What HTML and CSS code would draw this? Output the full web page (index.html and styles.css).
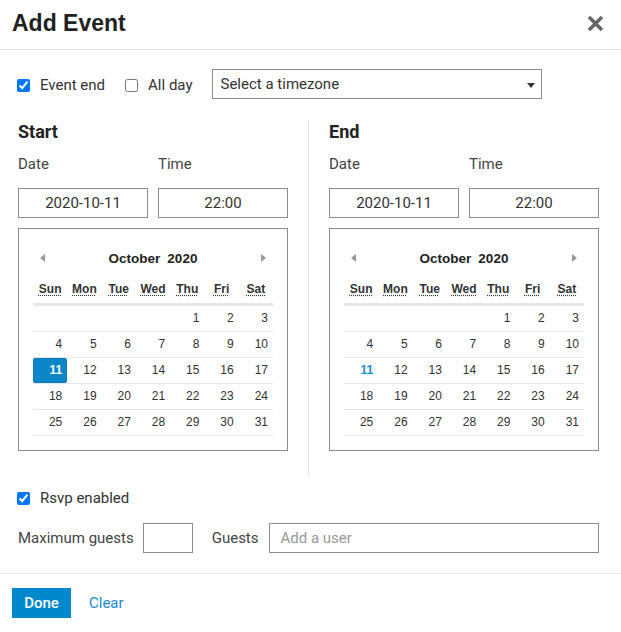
FILE: index.html
```html
<!DOCTYPE html>
<html lang="en">
<head>
    <meta charset="UTF-8">
    <title>Add Event</title>
    <link rel="stylesheet" href="styles.css">
</head>
<body>
    <div class="modal">
        <!-- Kopfzeile -->
        <header class="modal-header">
            <h1>Add Event</h1>
            <button class="close" title="Close">
                <svg width="17" height="17" viewBox="0 0 17 17"><path d="M2 2 L15 15 M15 2 L2 15" stroke="#666" stroke-width="3.6" fill="none"/></svg>
            </button>
        </header>

        <section class="modal-body">
            <div class="options-row">
                <label class="check"><input type="checkbox" checked>Event end</label>
                <label class="check"><input type="checkbox">All day</label>
                <div class="select">
                    <span>Select a timezone</span>
                    <span class="caret"></span>
                </div>
            </div>

            <div class="columns">
                <div class="col">
                    <h2>Start</h2>
                    <div class="fields">
                        <div class="field"><label>Date</label><input type="text" value="2020-10-11"></div>
                        <div class="field"><label>Time</label><input type="text" value="22:00"></div>
                    </div>
                    <div class="calendar">
                        <div class="cal-nav">
                            <span class="arrow prev"></span>
                            <span class="cal-title"><span>October</span><span>2020</span></span>
                            <span class="arrow next"></span>
                        </div>
                        <table>
                            <thead>
                                <tr><th><abbr title="Sunday">Sun</abbr></th><th><abbr title="Monday">Mon</abbr></th><th><abbr title="Tuesday">Tue</abbr></th><th><abbr title="Wednesday">Wed</abbr></th><th><abbr title="Thursday">Thu</abbr></th><th><abbr title="Friday">Fri</abbr></th><th><abbr title="Saturday">Sat</abbr></th></tr>
                            </thead>
                            <tbody>
                                <tr><td></td><td></td><td></td><td></td><td><span>1</span></td><td><span>2</span></td><td><span>3</span></td></tr>
                                <tr><td><span>4</span></td><td><span>5</span></td><td><span>6</span></td><td><span>7</span></td><td><span>8</span></td><td><span>9</span></td><td><span>10</span></td></tr>
                                <tr><td><span class="selected">11</span></td><td><span>12</span></td><td><span>13</span></td><td><span>14</span></td><td><span>15</span></td><td><span>16</span></td><td><span>17</span></td></tr>
                                <tr><td><span>18</span></td><td><span>19</span></td><td><span>20</span></td><td><span>21</span></td><td><span>22</span></td><td><span>23</span></td><td><span>24</span></td></tr>
                                <tr><td><span>25</span></td><td><span>26</span></td><td><span>27</span></td><td><span>28</span></td><td><span>29</span></td><td><span>30</span></td><td><span>31</span></td></tr>
                            </tbody>
                        </table>
                    </div>
                </div>

                <div class="col col-end">
                    <h2>End</h2>
                    <div class="fields">
                        <div class="field"><label>Date</label><input type="text" value="2020-10-11"></div>
                        <div class="field"><label>Time</label><input type="text" value="22:00"></div>
                    </div>
                    <div class="calendar">
                        <div class="cal-nav">
                            <span class="arrow prev"></span>
                            <span class="cal-title"><span>October</span><span>2020</span></span>
                            <span class="arrow next"></span>
                        </div>
                        <table>
                            <thead>
                                <tr><th><abbr title="Sunday">Sun</abbr></th><th><abbr title="Monday">Mon</abbr></th><th><abbr title="Tuesday">Tue</abbr></th><th><abbr title="Wednesday">Wed</abbr></th><th><abbr title="Thursday">Thu</abbr></th><th><abbr title="Friday">Fri</abbr></th><th><abbr title="Saturday">Sat</abbr></th></tr>
                            </thead>
                            <tbody>
                                <tr><td></td><td></td><td></td><td></td><td><span>1</span></td><td><span>2</span></td><td><span>3</span></td></tr>
                                <tr><td><span>4</span></td><td><span>5</span></td><td><span>6</span></td><td><span>7</span></td><td><span>8</span></td><td><span>9</span></td><td><span>10</span></td></tr>
                                <tr><td><span class="today">11</span></td><td><span>12</span></td><td><span>13</span></td><td><span>14</span></td><td><span>15</span></td><td><span>16</span></td><td><span>17</span></td></tr>
                                <tr><td><span>18</span></td><td><span>19</span></td><td><span>20</span></td><td><span>21</span></td><td><span>22</span></td><td><span>23</span></td><td><span>24</span></td></tr>
                                <tr><td><span>25</span></td><td><span>26</span></td><td><span>27</span></td><td><span>28</span></td><td><span>29</span></td><td><span>30</span></td><td><span>31</span></td></tr>
                            </tbody>
                        </table>
                    </div>
                </div>
            </div>

            <label class="check rsvp"><input type="checkbox" checked>Rsvp enabled</label>

            <div class="guests-row">
                <label>Maximum guests</label>
                <input type="text" class="max-input">
                <label class="guests-label">Guests</label>
                <input type="text" class="guests-input" placeholder="Add a user">
            </div>
        </section>

        <!-- Fußzeile -->
        <footer class="modal-footer">
            <button class="btn-done">Done</button>
            <button class="btn-clear">Clear</button>
        </footer>
    </div>
</body>
</html>
```

FILE: styles.css
```css
/* Grundlayout */
body {
    margin: 0;
    background-color: white;
    font-family: Roboto, "Liberation Sans", sans-serif;
    color: #333;
}

.modal {
    width: 621px;
}

/* Kopfzeile */
.modal-header {
    height: 50px;
    box-sizing: border-box;
    padding: 9px 17px 0 12px;
    border-bottom: 1px solid #e6e6e6;
    display: flex;
    justify-content: space-between;
    align-items: flex-start;
}

.modal-header h1 {
    margin: 0;
    font-family: "Liberation Sans", Arial, sans-serif;
    font-size: 23px;
    line-height: 28px;
    font-weight: bold;
    color: #222;
}

.close {
    margin-top: 6px;
    padding: 0;
    border: none;
    background: none;
    width: 17px;
    height: 17px;
    cursor: pointer;
}

.close svg {
    display: block;
}

/* Inhalt */
.modal-body {
    padding: 19px 22px 20px 18px;
}

.check {
    display: flex;
    align-items: center;
    font-size: 15px;
    line-height: 18px;
    color: #333;
}

.check input {
    margin: 1px 10px 0 -1px;
    width: 13px;
    height: 13px;
}

.options-row {
    display: flex;
    align-items: center;
    height: 30px;
}

.options-row .check {
    padding-top: 2px;
}

.options-row .check + .check {
    margin-left: 21px;
}

.select {
    margin-left: 19px;
    width: 330px;
    height: 30px;
    box-sizing: border-box;
    border: 1px solid #8c8c8c;
    display: flex;
    align-items: center;
    justify-content: space-between;
    padding: 0 6px 0 8px;
    font-size: 15px;
    color: #333;
}

.caret {
    width: 0;
    height: 0;
    border-left: 4.5px solid transparent;
    border-right: 4.5px solid transparent;
    border-top: 5px solid #333;
    margin-top: 2px;
}

/* Start / End Spalten */
.columns {
    margin-top: 21px;
    display: grid;
    grid-template-columns: 270px 291px;
    column-gap: 20px;
}

.col {
    padding-bottom: 26px;
}

.col-end {
    border-left: 1px solid #e6e6e6;
    padding-left: 20px;
}

.col h2 {
    margin: 0;
    padding-top: 1px;
    font-size: 18px;
    line-height: 22px;
    font-weight: bold;
    color: #222;
}

.fields {
    margin-top: 12px;
    display: flex;
    gap: 10px;
}

.field {
    display: flex;
    flex-direction: column;
    width: 130px;
}

.field label {
    font-size: 15px;
    line-height: 18px;
    color: #444;
}

.field input {
    margin-top: 15px;
    width: 130px;
    height: 30px;
    box-sizing: border-box;
    border: 1px solid #8c8c8c;
    padding: 0;
    text-align: center;
    font-family: Roboto, sans-serif;
    font-size: 15px;
    color: #333;
}

/* Kalender */
.calendar {
    margin-top: 10px;
    width: 270px;
    box-sizing: border-box;
    border: 1px solid #8c8c8c;
    padding: 14px;
    font-family: "Liberation Sans", Arial, sans-serif;
    color: #333;
}

.cal-nav {
    height: 30px;
    display: flex;
    align-items: center;
    justify-content: space-between;
    padding: 0 7px;
}

.cal-title {
    display: flex;
    gap: 7px;
    font-size: 13.5px;
    font-weight: bold;
    color: #222;
}

.arrow {
    width: 0;
    height: 0;
    border-top: 4.5px solid transparent;
    border-bottom: 4.5px solid transparent;
}

.arrow.prev {
    border-right: 5px solid #999;
}

.arrow.next {
    border-left: 5px solid #999;
}

.calendar table {
    width: 100%;
    border-collapse: collapse;
    table-layout: fixed;
}

.calendar th {
    height: 28px;
    padding: 2px 0 0;
    font-size: 12px;
    font-weight: bold;
    text-align: center;
    vertical-align: middle;
    border-bottom: 3px solid #e6e6e6;
}

.calendar abbr {
    text-decoration: underline dotted;
    text-underline-offset: 2px;
}

.calendar td {
    height: 25px;
    padding: 0;
    border-bottom: 1px solid #e6e6e6;
    font-size: 12px;
}

.calendar td span {
    display: block;
    height: 25px;
    line-height: 25px;
    text-align: right;
    padding-right: 5px;
}

.calendar td span.selected {
    background-color: #0a86c9;
    color: white;
    font-weight: bold;
    border-radius: 3px;
    box-shadow: inset 0 0 0 1px #0b7dbb;
}

.calendar td span.today {
    color: #1a8fd3;
    font-weight: bold;
}

/* RSVP */
.rsvp {
    margin-top: 11px;
    height: 20px;
}

.guests-row {
    margin-top: 15px;
    display: flex;
    align-items: center;
    font-size: 15px;
    color: #444;
    white-space: nowrap;
}

.guests-row label,
.guests-row input {
    flex-shrink: 0;
}

.guests-row input {
    height: 30px;
    box-sizing: border-box;
    border: 1px solid #8c8c8c;
    font-family: Roboto, sans-serif;
    font-size: 15px;
}

.max-input {
    margin-left: 9px;
    width: 50px;
}

.guests-label {
    margin-left: 19px;
}

.guests-input {
    margin-left: 10px;
    width: 330px;
    padding: 0 11px;
}

.guests-input::placeholder {
    color: #999;
}

/* Fußzeile */
.modal-footer {
    border-top: 1px solid #e6e6e6;
    padding: 14px 12px;
    display: flex;
    align-items: center;
}

.btn-done {
    width: 59px;
    height: 30px;
    border: none;
    background-color: #0088cc;
    color: white;
    font-family: Roboto, sans-serif;
    font-size: 15px;
    font-weight: 500;
    cursor: pointer;
}

.btn-clear {
    margin-left: 10px;
    border: none;
    background: none;
    color: #1e8ad2;
    font-family: Roboto, sans-serif;
    font-size: 15px;
    padding: 0 8px;
    cursor: pointer;
}
```
